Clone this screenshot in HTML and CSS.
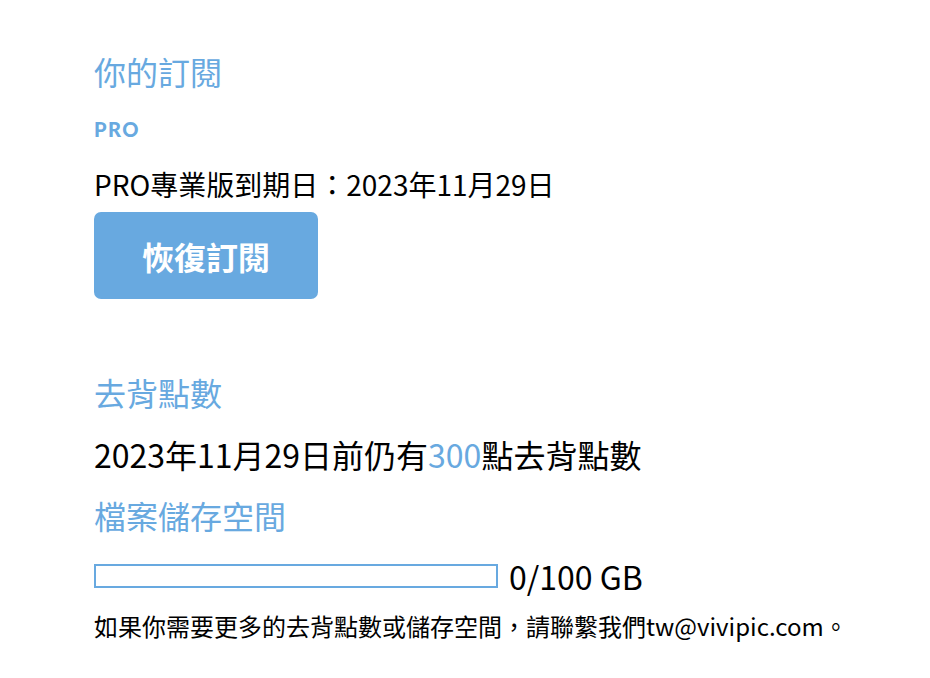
FILE: index.html
```html
<!DOCTYPE html>
<html lang="zh-Hant">
<head>
<meta charset="utf-8">
<title>你的訂閱</title>
<link rel="stylesheet" href="styles.css">
</head>
<body>
<main class="page">
  <section class="subscription">
    <h1 class="title">你的訂閱</h1>
    <div class="plan">PRO</div>
    <p class="expiry">PRO專業版到期日：2023年11月29日</p>
    <button class="restore" type="button">恢復訂閱</button>
  </section>
  <section class="credits">
    <h2 class="title">去背點數</h2>
    <p class="credit-line">2023年11月29日前仍有<span class="accent">300</span>點去背點數</p>
    <h2 class="title storage-title">檔案儲存空間</h2>
    <div class="storage-row">
      <div class="bar"><div class="bar-fill" style="width:0%"></div></div>
      <span class="storage-value">0/100 GB</span>
    </div>
    <p class="note">如果你需要更多的去背點數或儲存空間，請聯繫我們tw@vivipic.com。</p>
  </section>
</main>
</body>
</html>
```
FILE: styles.css
```css
* { box-sizing: border-box; }
html, body { margin: 0; padding: 0; background: #fff; }
body {
  font-family: "Noto Sans CJK TC", "Noto Sans", sans-serif;
  color: #000;
}
.page {
  padding: 47px 0 0 94px;
}
.title {
  margin: 0;
  font-size: 32px;
  line-height: 48px;
  font-weight: 400;
  color: #68a9e0;
}
.plan {
  margin-top: 22px;
  font-family: Lato, "Noto Sans", sans-serif;
  font-weight: 900;
  font-size: 20px;
  line-height: 24px;
  letter-spacing: 1.5px;
  color: #68a9e0;
}
.expiry {
  margin: 23px 0 0;
  font-size: 28px;
  line-height: 40px;
}
.restore {
  display: block;
  margin-top: 8px;
  width: 224px;
  height: 87px;
  border: 0;
  border-radius: 7px;
  background: #68a9e0;
  color: #fff;
  font-family: "Noto Sans CJK TC", sans-serif;
  font-size: 32px;
  font-weight: 700;
  padding: 0;
}
.credits { margin-top: 69px; }
.credit-line {
  margin: 14px 0 0;
  font-size: 32px;
  line-height: 48px;
}
.accent { color: #68a9e0; }
.storage-title { margin-top: 13px; }
.storage-row {
  margin-top: 17px;
  height: 40px;
  display: flex;
  align-items: center;
  gap: 11px;
}
.bar {
  width: 404px;
  height: 24px;
  border: 2px solid #68a9e0;
}
.bar-fill { height: 100%; background: #68a9e0; }
.storage-value {
  font-size: 32px;
  line-height: 40px;
}
.note {
  margin: 12px 0 0;
  font-size: 24px;
  line-height: 36px;
}
```
